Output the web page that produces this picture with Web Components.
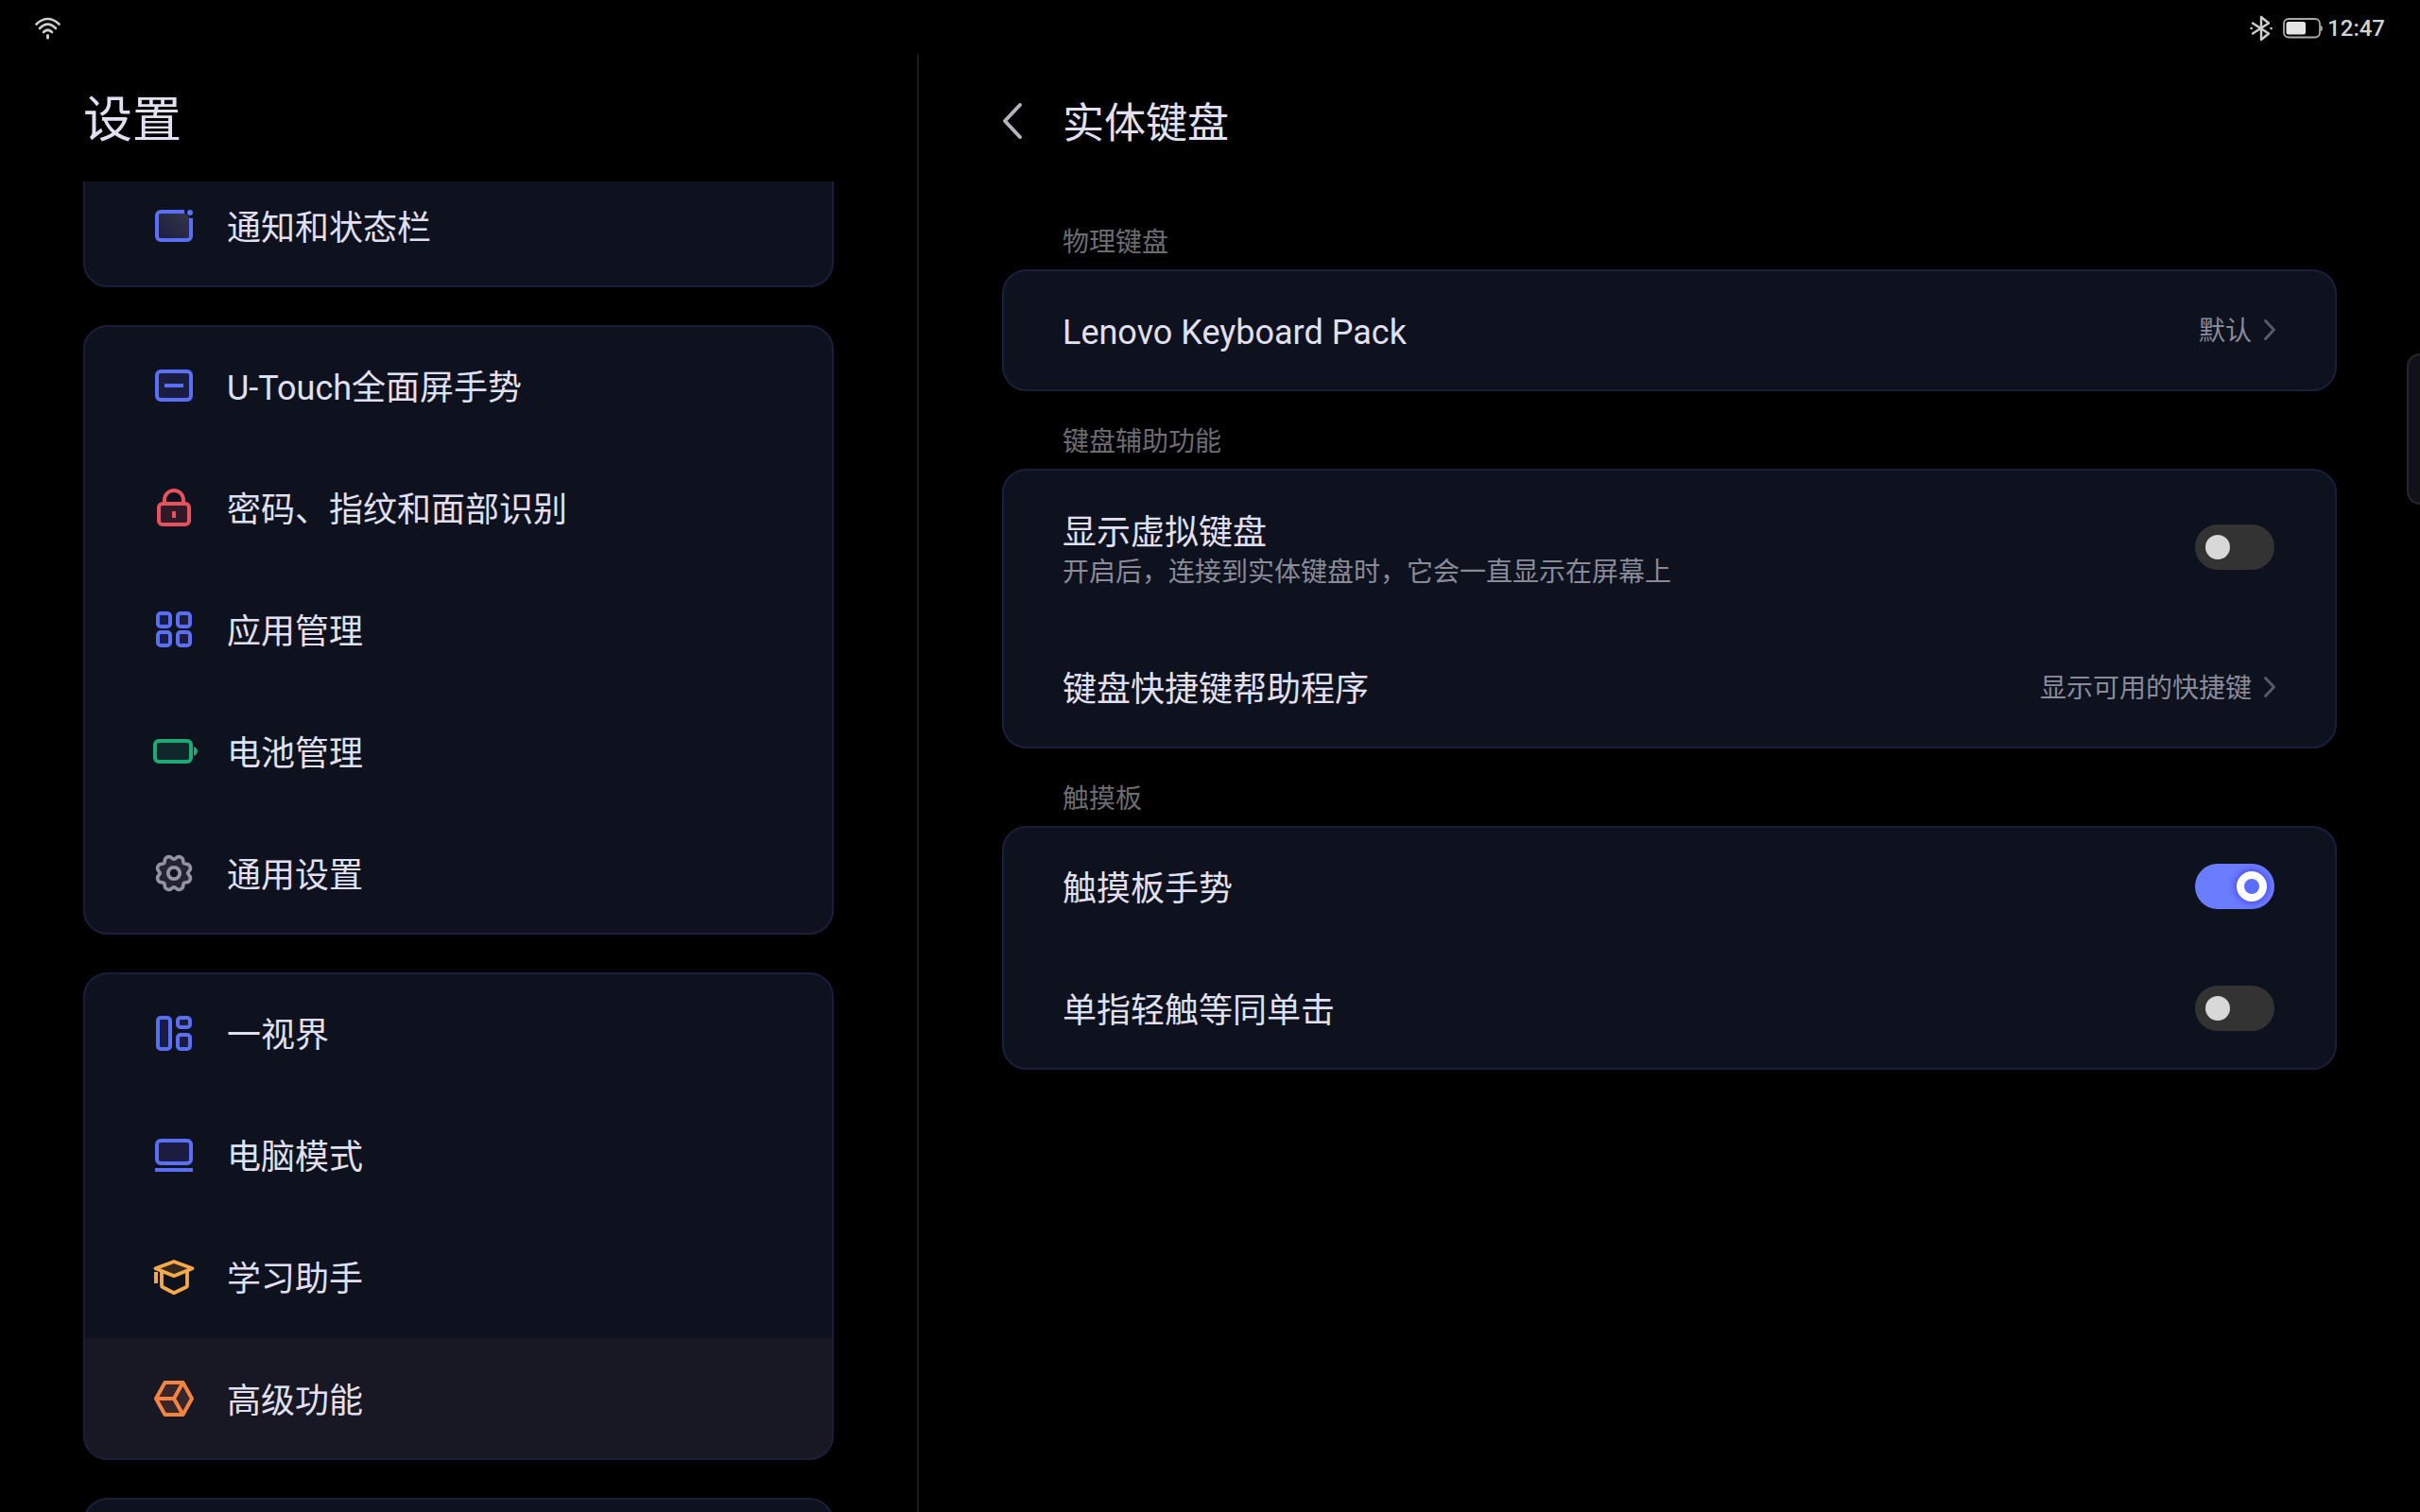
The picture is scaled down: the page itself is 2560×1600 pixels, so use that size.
<!DOCTYPE html>
<html lang="zh-CN">
<head>
<meta charset="utf-8">
<meta name="viewport" content="width=device-width, initial-scale=1">
<title>设置</title>
<style>
  :root {
    --card: #0e111e;
    --card-line: #1b1e3a;
    --selected: #171823;
    --text: #e1e0f2;
    --muted: #8a8b99;
    --label: #6c6c72;
    --row: 129px;
  }
  body {
    margin: 0;
    height: 100vh;
    overflow: hidden;
    background: #000;
    color: var(--text);
    font-family: Roboto, "Noto Sans CJK SC", sans-serif;
    font-size: 36px;
    line-height: 44px;
  }
</style>
</head>
<body>
<settings-app>
  <status-bar slot="status" time="12:47"></status-bar>

  <side-pane slot="side" heading="设置">
    <nav-card continued>
      <nav-item icon="notify">通知和状态栏</nav-item>
    </nav-card>
    <nav-card>
      <nav-item icon="gesture">U-Touch全面屏手势</nav-item>
      <nav-item icon="lock">密码、指纹和面部识别</nav-item>
      <nav-item icon="apps">应用管理</nav-item>
      <nav-item icon="battery">电池管理</nav-item>
      <nav-item icon="gear">通用设置</nav-item>
    </nav-card>
    <nav-card>
      <nav-item icon="vision">一视界</nav-item>
      <nav-item icon="pc">电脑模式</nav-item>
      <nav-item icon="study">学习助手</nav-item>
      <nav-item icon="cube" selected>高级功能</nav-item>
    </nav-card>
    <nav-card></nav-card>
  </side-pane>

  <detail-pane slot="detail" heading="实体键盘">
    <settings-group label="物理键盘">
      <link-row value="默认">Lenovo Keyboard Pack</link-row>
    </settings-group>
    <settings-group label="键盘辅助功能">
      <toggle-row note="开启后，连接到实体键盘时，它会一直显示在屏幕上">显示虚拟键盘</toggle-row>
      <link-row value="显示可用的快捷键">键盘快捷键帮助程序</link-row>
    </settings-group>
    <settings-group label="触摸板">
      <toggle-row on>触摸板手势</toggle-row>
      <toggle-row>单指轻触等同单击</toggle-row>
    </settings-group>
  </detail-pane>
</settings-app>

<script>
  class Base extends HTMLElement {
    connectedCallback() {
      if (this.shadowRoot) return;
      this.attachShadow({ mode: 'open' }).innerHTML = this.render();
    }
  }

  /* Eight-lobed outline of the gear, sampled around the centre of a 48px box. */
  function gearPath() {
    let d = '';
    for (let i = 0; i < 160; i++) {
      const a = i / 160 * Math.PI * 2;
      const dip = Math.pow((1 + Math.cos(8 * a)) / 2, 1.6);
      const r = 18.4 - 3.6 * dip;
      d += (i ? 'L' : 'M') + (24 + r * Math.sin(a)).toFixed(2) + ' ' + (24 - r * Math.cos(a)).toFixed(2);
    }
    return d + 'Z';
  }

  const BLUE = 'stroke="#5b6ff6" fill="#1a1d40"';
  const ICONS = {
    notify: `<defs><linearGradient id="g" x1="0" y1="1" x2="1" y2="0"><stop offset="0" stop-color="#1a1d40"/><stop offset="1" stop-color="#36374a"/></linearGradient></defs>
      <path d="M10 9h25l3 4 4 3v19a4 4 0 0 1-4 4H10a4 4 0 0 1-4-4V13a4 4 0 0 1 4-4z" fill="url(#g)"/>
      <path d="M35 9H10a4 4 0 0 0-4 4v22a4 4 0 0 0 4 4h28a4 4 0 0 0 4-4V16" fill="none" stroke="#5b6ff6" stroke-width="4"/>
      <circle cx="41" cy="10" r="3" fill="#5b6ff6"/>`,
    gesture: `<g ${BLUE} stroke-width="4"><rect x="6" y="9" width="36" height="30" rx="4"/><path d="M14 24h20"/></g>`,
    lock: `<g stroke="#e8515d" fill="#301a2a" stroke-width="4"><path d="M14 18v-2a10 10 0 0 1 20 0v2" fill="none"/><rect x="8" y="20" width="32" height="22" rx="4"/><path d="M24 28v7"/></g>`,
    apps: `<g ${BLUE} stroke-width="4"><rect x="7" y="7" width="13" height="14" rx="3"/><rect x="28" y="7" width="13" height="14" rx="3"/><rect x="7" y="27" width="13" height="14" rx="3"/><rect x="28" y="27" width="13" height="14" rx="3"/></g>`,
    battery: `<rect x="4" y="13" width="38" height="22" rx="4" fill="#10272b" stroke="#1eaa74" stroke-width="4"/><path d="M45 19q4 2 4 5t-4 5z" fill="#1eaa74"/>`,
    gear: `<path d="${gearPath()}" fill="#232430" stroke="#9293a3" stroke-width="3.6" stroke-linejoin="round"/><circle cx="24" cy="24" r="6.2" fill="#0e111e" stroke="#9293a3" stroke-width="3.8"/>`,
    vision: `<g ${BLUE} stroke-width="4"><rect x="7" y="8" width="13" height="33" rx="3"/><rect x="28" y="8" width="13" height="10" rx="3"/><rect x="28" y="26" width="13" height="15" rx="3"/></g>`,
    pc: `<g ${BLUE} stroke-width="4"><rect x="6" y="9" width="36" height="24" rx="4"/><path d="M4 40h40"/></g>`,
    study: `<g stroke="#f5a94b" stroke-width="3.8" stroke-linejoin="round" fill="none"><path d="M11 18v15.500q0 1 1 1.500L24 41.200 37 35q1-.5 1-1.500V18"/><path d="M24 8 43.500 15.200 24 23.200 4.500 15.200z" fill="#35271f"/><path d="M5 19v12" stroke-width="4"/></g>`,
    cube: `<g stroke="#f48443" fill="#382629" stroke-width="4" stroke-linejoin="round"><path d="M14.500 7h19L43 24l-9.500 17h-19L5 24z"/><path d="M5 24h19L33.500 7M24 24l9.500 17" fill="none"/></g>`
  };

  customElements.define('settings-app', class extends Base {
    render() {
      return `<style>
        :host { display: flex; flex-direction: column; height: 100%; }
        .panes { flex: 1; min-height: 0; display: grid; grid-template-columns: 243fr 397fr; grid-template-rows: minmax(0, 1fr); }
        .edge { position: absolute; top: 374px; right: 0; box-sizing: border-box; width: 14px; height: 160px;
          border: 2px solid #27272b; border-right: 0; border-radius: 16px 0 0 16px; background: #111119; }
      </style>
      <slot name="status"></slot>
      <div class="panes"><slot name="side"></slot><slot name="detail"></slot></div>
      <div class="edge"></div>`;
    }
  });

  customElements.define('status-bar', class extends Base {
    render() {
      return `<style>
        :host { display: flex; align-items: center; height: 58px; box-sizing: border-box; padding: 2px 37px 0 36px; color: #d2d2d2;
          font-size: 24px; line-height: 28px; font-weight: 500; }
        svg { display: block; overflow: visible; }
        .right { margin-left: auto; display: flex; align-items: center; }
        .bt { margin-right: 11px; }
        .bat { margin-right: 5px; }
      </style>
      <svg width="30" height="24" viewBox="0 0 30 24" fill="none" stroke="#cfcfcf" stroke-width="2.600" stroke-linecap="round">
        <path d="M2.500 7.500Q14.500-3.500 26.500 7.500M6 12Q14.500 3.500 23 12M10 16Q14.500 11.500 19 16"/><path d="M14.500 19.500v2.500" stroke-width="3"/>
      </svg>
      <div class="right">
        <svg class="bt" width="24" height="28" viewBox="0 0 24 28" fill="none" stroke="#cfcfcf" stroke-width="2.400" stroke-linejoin="round" stroke-linecap="round">
          <path d="M3 8.500 20 19.500 12 26V2l8 6.500L3 19.500"/><path d="M1.500 14h.2M22.500 14h.2"/>
        </svg>
        <svg class="bat" width="42" height="22" viewBox="0 0 42 22">
          <rect x="1" y="1" width="38" height="19.500" rx="5" fill="none" stroke="#a9a9a9" stroke-width="1.800"/>
          <rect x="3.500" y="4" width="20.500" height="13.500" rx="2.500" fill="#e4e4e4"/>
          <path d="M40 7.500q2 1.500 2 3.500t-2 3.500z" fill="#a9a9a9"/>
        </svg>
        <span>${this.getAttribute('time')}</span>
      </div>`;
    }
  });

  customElements.define('side-pane', class extends Base {
    render() {
      return `<style>
        :host { display: flex; flex-direction: column; min-width: 0; box-sizing: border-box;
          padding: 0 88px; border-right: 2px solid #1c1c1c; }
        h1 { margin: 0; flex: none; padding: 38px 0 32px; font-size: 52px; line-height: 64px; font-weight: 400; }
        nav { flex: 1; min-height: 0; overflow: hidden; }
        .list { display: flex; flex-direction: column; gap: 40px; margin-top: -17px; }
      </style>
      <h1>${this.getAttribute('heading')}</h1>
      <nav><div class="list"><slot></slot></div></nav>`;
    }
  });

  const CARD = `display: block; min-height: var(--row); border-radius: 26px; overflow: hidden;
    background: var(--card); outline: 2px solid var(--card-line); outline-offset: -2px;`;

  customElements.define('nav-card', class extends Base {
    render() {
      return `<style>
        :host { ${CARD} }
        :host([continued]) { border-top-left-radius: 0; border-top-right-radius: 0; }
      </style><slot></slot>`;
    }
  });

  customElements.define('nav-item', class extends Base {
    render() {
      return `<style>
        :host { display: block; }
        a { display: flex; align-items: center; gap: 32px; height: var(--row); box-sizing: border-box; padding: 0 72px 1px; color: inherit; text-decoration: none; }
        :host([selected]) a { background: var(--selected); }
        svg { flex: none; overflow: visible; }
        span { padding-top: 6px; }
      </style>
      <a href="#${this.getAttribute('icon')}">
        <svg width="48" height="48" viewBox="0 0 48 48" aria-hidden="true">${ICONS[this.getAttribute('icon')]}</svg>
        <span><slot></slot></span>
      </a>`;
    }
  });

  customElements.define('detail-pane', class extends Base {
    render() {
      return `<style>
        :host { display: block; min-width: 0; padding: 0 88px; overflow: hidden; }
        header { display: flex; align-items: center; gap: 40px; height: 140px; }
        button { width: 24px; height: 44px; padding: 0; border: 0; background: none; }
        svg { display: block; }
        h2 { margin: 0; padding-top: 6px; font-size: 44px; line-height: 52px; font-weight: 400; }
        .groups { padding-top: 5px; }
      </style>
      <header>
        <button type="button" aria-label="返回">
          <svg width="24" height="44" viewBox="0 0 24 44" fill="none" stroke="#b4b4bf" stroke-width="4" stroke-linecap="round" stroke-linejoin="round"><path d="M19 5 3 22 19 39"/></svg>
        </button>
        <h2>${this.getAttribute('heading')}</h2>
      </header>
      <div class="groups"><slot></slot></div>`;
    }
  });

  customElements.define('settings-group', class extends Base {
    render() {
      return `<style>
        :host { display: block; padding-top: 34px; }
        h3 { margin: 0; padding: 0 64px 8px; font-size: 28px; line-height: 40px; font-weight: 400; color: var(--label); }
        .card { ${CARD} }
      </style>
      <h3>${this.getAttribute('label')}</h3>
      <div class="card"><slot></slot></div>`;
    }
  });

  const ROW = `display: flex; align-items: center; justify-content: space-between; min-height: var(--row);
    box-sizing: border-box; padding: 0 66px 1px 64px;`;

  customElements.define('link-row', class extends Base {
    render() {
      return `<style>
        :host { display: block; }
        a { ${ROW} color: inherit; text-decoration: none; }
        .title { padding-top: 6px; }
        .end { display: flex; align-items: center; }
        .value { padding-top: 4px; font-size: 28px; line-height: 40px; color: var(--muted); }
        svg { overflow: visible; }
      </style>
      <a href="#">
        <span class="title"><slot></slot></span>
        <span class="end">
          <span class="value">${this.getAttribute('value')}</span>
          <svg width="24" height="36" viewBox="0 0 24 36" fill="none" stroke="#585a66" stroke-width="3" stroke-linecap="round" stroke-linejoin="round"><path d="M14.500 8.500 23.500 18l-9 9.500"/></svg>
        </span>
      </a>`;
    }
  });

  customElements.define('toggle-row', class extends Base {
    render() {
      const note = this.getAttribute('note');
      return `<style>
        :host { display: block; }
        .row { ${ROW} }
        .text { padding-top: 6px; }
        :host([note]) .row { min-height: 167px; }
        :host([note]) .text { padding-top: 10px; }
        label { display: block; }
        p { margin: 0; font-size: 28px; line-height: 40px; color: var(--muted); }
        input { appearance: none; flex: none; display: flex; align-items: center; box-sizing: border-box; width: 84px; height: 48px;
          margin: 0; padding: 0 11px; border-radius: 24px; background: #333; }
        input::before { content: ""; width: 26px; height: 26px; border-radius: 50%; background: #d8d8d8; }
        input:checked { justify-content: flex-end; padding: 0 8px; background: #6b7dff; }
        input:checked::before { box-sizing: border-box; width: 32px; height: 32px; border: 8px solid #fff; background: #5b6dfb; box-shadow: 0 0 8px 1px #4340f0; }
      </style>
      <div class="row">
        <div class="text">
          <label for="t"><slot></slot></label>
          ${note ? `<p id="n">${note}</p>` : ''}
        </div>
        <input id="t" type="checkbox" role="switch" ${note ? 'aria-describedby="n"' : ''} ${this.hasAttribute('on') ? 'checked' : ''}>
      </div>`;
    }
  });
</script>
</body>
</html>
